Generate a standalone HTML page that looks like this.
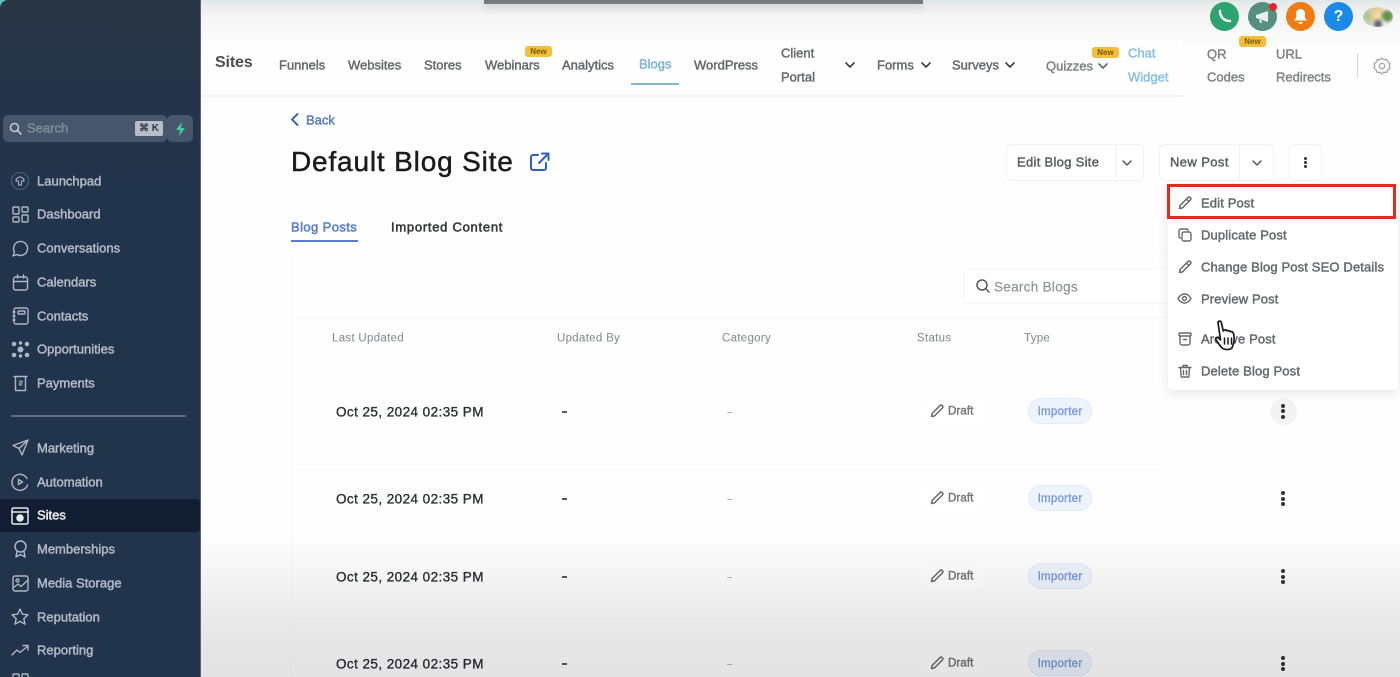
<!DOCTYPE html>
<html><head><meta charset="utf-8"><style>
*{box-sizing:border-box}
html,body{margin:0;padding:0;width:1400px;height:677px;overflow:hidden;background:#fefefe}
body{font-family:"Liberation Sans",sans-serif;position:relative}
#w{position:absolute;inset:0;filter:blur(.35px);overflow:hidden}
.t{position:absolute;white-space:nowrap;line-height:1;transform:translateY(-50%);-webkit-text-stroke-width:.45px}
.a{position:absolute}
svg{position:absolute;overflow:visible;fill:none;stroke-linecap:round;stroke-linejoin:round}
.s{font-size:13px;color:#b9c2cd;left:37px;opacity:.95}
.n{font-size:13px;color:#55585e;opacity:.9}
.bd{position:absolute;background:#f3bf3a;border-radius:3px;color:#7a5a10;font-size:8px;font-weight:700;text-align:center;line-height:11px;height:11px;width:27px}
.m{font-size:13px;color:#55585e;left:1201px;opacity:.9;letter-spacing:.14px}
.h{font-size:11.5px;color:#8b8f96;letter-spacing:.3px;-webkit-text-stroke-width:.1px}
.d{font-size:13.5px;color:#2c2f34;left:336px;letter-spacing:.43px;-webkit-text-stroke-width:.35px}
.btn{position:absolute;background:#fff;border:1px solid #f1f2f4;border-radius:6px;height:37px;top:144px}
.dr{font-size:11.5px;color:#777;left:948px;letter-spacing:.1px}
.im{position:absolute;left:1028px;width:64px;height:26px;border-radius:13px;background:#eef4fd;border:1px solid #e3e9f4;color:#7d9bd6;font-size:11.5px;text-align:center;line-height:26px;-webkit-text-stroke-width:.4px;letter-spacing:.25px}
.ds{position:absolute;width:4px;height:4px;border-radius:50%;background:#333}
.dash{position:absolute;left:562px;width:5px;height:1.5px;background:#55585c}
.dash2{position:absolute;left:727px;width:5px;height:1px;background:#b5b5b5}
.dp{position:absolute;left:924px;width:57px;height:25px;background:#fff;border-radius:6px}
</style></head><body><div id="w">

<!-- page backdrop -->
<div class="a" style="left:200px;top:0;width:1200px;height:46px;background:linear-gradient(#e6e7e8 0,#f3f3f4 14px,#fbfbfb 40px)"></div>
<div class="a" style="left:200px;top:0;width:1200px;height:2px;background:#dfe9ec"></div>
<div class="a" style="left:484px;top:0;width:439px;height:4px;background:#77797d;box-shadow:0 3px 8px rgba(0,0,0,.18)"></div>
<div class="a" style="left:200px;top:40px;width:983px;height:57px;background:#fefefe;border-bottom:2px solid #f2f3f5"></div>

<!-- sidebar -->
<div class="a" style="left:0;top:0;width:12px;height:12px;background:#5cc5cc"></div>
<div class="a" style="left:0;top:0;width:201px;height:677px;background:linear-gradient(#2a3644 0,#263548 60px,#22334c 200px,#22334c 100%);border-right:1px solid #5b6472;border-top-left-radius:8px"></div>
<div class="a" style="left:3px;top:115px;width:164px;height:27px;border-radius:5px;background:#47566a"></div>
<div class="a" style="left:167px;top:115px;width:26px;height:27px;border-radius:5px;background:#47566a"></div>
<svg style="left:9px;top:122px" width="13" height="13" stroke="#c3c9d0" stroke-width="1.6"><circle cx="5.5" cy="5.5" r="4"/><path d="M8.5 8.5L12 12"/></svg>
<div class="t" style="left:27px;top:128px;font-size:13px;color:#7f8b9a">Search</div>
<div class="a" style="left:135px;top:121px;width:28px;height:15px;background:#b7bec7;border-radius:2px;color:#2f3a48;font-size:10px;font-weight:700;text-align:center;line-height:15px">⌘ K</div>
<svg style="left:174px;top:122px" width="13" height="14"><path d="M8 0L2 8H6L5 14L11 6H7Z" fill="#3ecf9e"/></svg>

<div class="t s" style="top:181px">Launchpad</div>
<div class="t s" style="top:214px">Dashboard</div>
<div class="t s" style="top:248px">Conversations</div>
<div class="t s" style="top:282px">Calendars</div>
<div class="t s" style="top:315.500px">Contacts</div>
<div class="t s" style="top:349px">Opportunities</div>
<div class="t s" style="top:383px">Payments</div>
<div class="a" style="left:11px;top:415px;width:175px;height:2px;background:#5f7082"></div>
<div class="t s" style="top:448px">Marketing</div>
<div class="t s" style="top:481.500px">Automation</div>
<div class="a" style="left:0;top:499px;width:200px;height:33px;background:#111d30;border-radius:0 4px 4px 0"></div>
<div class="t s" style="top:515px;color:#f0f2f5;opacity:1">Sites</div>
<div class="t s" style="top:549px">Memberships</div>
<div class="t s" style="top:583px">Media Storage</div>
<div class="t s" style="top:616.500px">Reputation</div>
<div class="t s" style="top:650px">Reporting</div>

<svg style="left:11px;top:172px" width="18" height="18" stroke="#9aa4b1" stroke-width="1.3"><circle cx="9" cy="9" r="8.5" stroke="#4a5a6e"/><path d="M5 9a4 4 0 0 1 8 0h-2.5v4h-3V9Z"/></svg>
<svg style="left:12px;top:206px" width="17" height="17" stroke="#aeb7c2" stroke-width="1.4"><rect x="1" y="1" width="6" height="7" rx="1"/><rect x="10" y="1" width="6" height="5" rx="1"/><rect x="1" y="11" width="6" height="5" rx="1"/><rect x="10" y="9" width="6" height="7" rx="1"/></svg>
<svg style="left:12px;top:240px" width="17" height="17" stroke="#aeb7c2" stroke-width="1.4"><path d="M1 16l1.5-4A7 7 0 1 1 5 14.5Z"/></svg>
<svg style="left:12px;top:274px" width="17" height="17" stroke="#aeb7c2" stroke-width="1.4"><rect x="1.5" y="3" width="14" height="13" rx="2"/><path d="M1.5 7.5h14M5.5 1v3M11.5 1v3"/></svg>
<svg style="left:12px;top:307px" width="17" height="18" stroke="#aeb7c2" stroke-width="1.4"><rect x="2" y="1" width="14" height="16" rx="2"/><rect x="6" y="4" width="7" height="3" rx="1"/><path d="M1 5h2M1 9h2M1 13h2"/></svg>
<svg style="left:11px;top:341px" width="19" height="17" stroke="#aeb7c2" stroke-width="1"><g fill="#aeb7c2"><circle cx="9.5" cy="8.500" r="2.500"/><circle cx="3" cy="3" r="1.800"/><circle cx="16" cy="3" r="1.800"/><circle cx="3" cy="14" r="1.800"/><circle cx="16" cy="14" r="1.800"/><circle cx="9.500" cy="2" r="1.200"/><circle cx="9.500" cy="15" r="1.200"/></g></svg>
<svg style="left:13px;top:375px" width="15" height="17" stroke="#aeb7c2" stroke-width="1.400"><path d="M1 1.500h13M2.500 1.500v14h10v-14"/><path d="M6 6h3v2H6.500v2H9" stroke-width="1.100"/></svg>
<svg style="left:12px;top:439px" width="17" height="17" stroke="#aeb7c2" stroke-width="1.400"><path d="M16 1L1 6.500l6 3 3 6.500ZM7 9.500L16 1"/></svg>
<svg style="left:11px;top:473px" width="18" height="18" stroke="#aeb7c2" stroke-width="1.400"><path d="M16 5.500A8 8 0 1 0 16.500 12"/><path d="M7.500 6.500l4 2.500-4 2.500Z"/></svg>
<svg style="left:11px;top:507px" width="18" height="18" stroke="#e6e9ee" stroke-width="1.500"><rect x="1" y="1" width="16" height="16" rx="1.500"/><path d="M1 5h16"/><circle cx="9" cy="11" r="3" fill="#e6e9ee"/></svg>
<svg style="left:13px;top:540px" width="15" height="18" stroke="#aeb7c2" stroke-width="1.500"><circle cx="7.500" cy="6.500" r="5.500"/><path d="M4 11.500L3 17l4.500-2.500L12 17l-1-5.500"/></svg>
<svg style="left:12px;top:575px" width="17" height="17" stroke="#aeb7c2" stroke-width="1.400"><rect x="1" y="1" width="15" height="15" rx="2"/><circle cx="5.500" cy="5.500" r="1.500"/><path d="M1 13l5-4 3 2.500L16 5"/></svg>
<svg style="left:11px;top:608px" width="18" height="17" stroke="#aeb7c2" stroke-width="1.400"><path d="M9 1l2.400 5.200 5.600.6-4.200 3.800 1.200 5.600L9 13.400 4 16.200l1.200-5.600L1 6.800l5.600-.6Z"/></svg>
<svg style="left:11px;top:644px" width="18" height="12" stroke="#aeb7c2" stroke-width="1.400"><path d="M1 11l5-5 3 2.500L17 2M12 1.500h5V6"/></svg>
<svg style="left:12px;top:673px" width="17" height="6" stroke="#aeb7c2" stroke-width="1.400"><rect x="1" y="1" width="6" height="7" rx="1"/><rect x="10" y="1" width="6" height="7" rx="1"/></svg>

<!-- top nav -->
<div class="t" style="left:215px;top:63px;font-size:16px;font-weight:700;color:#3a3c40;opacity:.9;letter-spacing:-.15px;-webkit-text-stroke-width:0">Sites</div>
<div class="t n" style="left:279px;top:65px">Funnels</div>
<div class="t n" style="left:348px;top:65px">Websites</div>
<div class="t n" style="left:424px;top:65px">Stores</div>
<div class="t n" style="left:485px;top:65px">Webinars</div>
<div class="bd" style="left:525px;top:46px">New</div>
<div class="t n" style="left:562px;top:65px">Analytics</div>
<div class="t n" style="left:639px;top:64px;color:#7fb2d9;opacity:1">Blogs</div>
<div class="a" style="left:631px;top:83px;width:48px;height:2px;background:#84b6d8"></div>
<div class="t n" style="left:694px;top:65px">WordPress</div>
<div class="t n" style="left:781px;top:53px">Client</div>
<div class="t n" style="left:781px;top:77px">Portal</div>
<svg style="left:845px;top:62px" width="10" height="6" stroke="#44464b" stroke-width="1.800"><path d="M1 1l4 4 4-4"/></svg>
<div class="t n" style="left:877px;top:65px">Forms</div>
<svg style="left:921px;top:62px" width="10" height="6" stroke="#44464b" stroke-width="1.800"><path d="M1 1l4 4 4-4"/></svg>
<div class="t n" style="left:952px;top:65px">Surveys</div>
<svg style="left:1005px;top:62px" width="10" height="6" stroke="#44464b" stroke-width="1.800"><path d="M1 1l4 4 4-4"/></svg>
<div class="t n" style="left:1046px;top:66px;opacity:.75">Quizzes</div>
<svg style="left:1098px;top:63px" width="10" height="6" stroke="#6a6d72" stroke-width="1.800"><path d="M1 1l4 4 4-4"/></svg>
<div class="bd" style="left:1092px;top:47px">New</div>
<div class="t n" style="left:1128px;top:53px;color:#8cc0e0;opacity:1">Chat</div>
<div class="t n" style="left:1128px;top:77px;color:#8cc0e0;opacity:1">Widget</div>
<div class="t n" style="left:1207px;top:54px;opacity:.75">QR</div>
<div class="t n" style="left:1207px;top:77px;opacity:.75">Codes</div>
<div class="bd" style="left:1239px;top:36px">New</div>
<div class="t n" style="left:1276px;top:54px;opacity:.75">URL</div>
<div class="t n" style="left:1276px;top:77px;opacity:.75">Redirects</div>
<div class="a" style="left:1357px;top:54px;width:1px;height:24px;background:#d5d7da"></div>
<svg style="left:1373px;top:57px" width="18" height="18" stroke="#a3a6ab" stroke-width="1.300"><circle cx="9" cy="9" r="2.700"/><path d="M9 1l2 1.800 2.800-.3 1 2.600 2.200 1.500-.8 2.400.8 2.400-2.200 1.500-1 2.600-2.800-.3L9 17l-2-1.800-2.800.3-1-2.600L1 11.400 1.800 9 1 6.600l2.200-1.500 1-2.600 2.800.3Z"/></svg>

<!-- header circles -->
<div class="a" style="left:1210px;top:2px;width:29px;height:29px;border-radius:50%;background:#2ea36f"></div>
<svg style="left:1217px;top:9px" width="15" height="15" stroke="#fff" stroke-width="2.400"><path d="M3 2c0 6 4 10 10 10"/></svg>
<div class="a" style="left:1248px;top:2px;width:29px;height:29px;border-radius:50%;background:#55907f"></div>
<svg style="left:1255px;top:10px" width="16" height="14"><path d="M1 5l12-4v11L1 8Z M4 9l1 4h2l-1-4Z" fill="#e6efec"/></svg>
<div class="a" style="left:1269px;top:3px;width:8px;height:8px;border-radius:50%;background:#e8242a"></div>
<div class="a" style="left:1286px;top:2px;width:29px;height:29px;border-radius:50%;background:#f07d14"></div>
<svg style="left:1293px;top:8px" width="15" height="17"><path d="M7.500 1a4.500 4.500 0 0 0-4.500 4.500V10L1 12.500h13L12 10V5.500A4.500 4.500 0 0 0 7.500 1Z M5.500 14a2 2 0 0 0 4 0Z" fill="#fff"/></svg>
<div class="a" style="left:1324px;top:2px;width:29px;height:29px;border-radius:50%;background:#1a8ae8;color:#fff;font-weight:700;font-size:16px;line-height:29px;text-align:center">?</div>
<div class="a" style="left:1363px;top:7px;width:30px;height:20px;border-radius:50%;background:radial-gradient(circle at 82% 45%,#5f8a4c 0,#6f9a5c 14%,transparent 28%),radial-gradient(circle at 50% 85%,#4a5670 0,#8c8d9c 14%,transparent 26%),radial-gradient(circle at 48% 40%,#f1dfb4 0,#e3c98f 28%,transparent 48%),radial-gradient(circle at 18% 45%,#a9bf8a 0,#c9d4b4 30%,#e8e8e0 60%)"></div>

<!-- page head -->
<svg style="left:290px;top:113px" width="9" height="13" stroke="#3f67b3" stroke-width="2"><path d="M7.500 1L2 6.500 7.500 12"/></svg>
<div class="t" style="left:306px;top:119.500px;font-size:13px;color:#5b7cc0">Back</div>
<div class="t" style="left:291px;top:162px;font-size:28px;color:#1a1b1e;letter-spacing:.83px">Default Blog Site</div>
<svg style="left:530px;top:152px" width="20" height="19" stroke="#2f62c0" stroke-width="2"><path d="M8 3H3a2 2 0 0 0-2 2v11a2 2 0 0 0 2 2h11a2 2 0 0 0 2-2v-5M9 11L18 2M12 1.500h6.500V8"/></svg>

<div class="btn" style="left:1006px;width:138px"></div>
<div class="a" style="left:1115px;top:144px;width:1px;height:37px;background:#f1f2f4"></div>
<div class="t" style="left:1017px;top:162px;font-size:13px;color:#4e5156;opacity:.92;letter-spacing:.3px">Edit Blog Site</div>
<svg style="left:1122px;top:160px" width="10" height="6" stroke="#55585d" stroke-width="1.500"><path d="M1 1l4 4 4-4"/></svg>
<div class="btn" style="left:1159px;width:115px"></div>
<div class="a" style="left:1239px;top:144px;width:1px;height:37px;background:#f1f2f4"></div>
<div class="t" style="left:1170px;top:162px;font-size:13px;color:#4e5156;opacity:.92;letter-spacing:.4px">New Post</div>
<svg style="left:1252px;top:160px" width="10" height="6" stroke="#55585d" stroke-width="1.500"><path d="M1 1l4 4 4-4"/></svg>
<div class="btn" style="left:1289px;width:33px"></div>
<div class="ds" style="left:1304px;top:157px;width:3px;height:3px"></div><div class="ds" style="left:1304px;top:161px;width:3px;height:3px"></div><div class="ds" style="left:1304px;top:165px;width:3px;height:3px"></div>

<div class="t" style="left:291px;top:227px;font-size:13px;color:#5a7fc8;letter-spacing:.4px;-webkit-text-stroke-width:.55px">Blog Posts</div>
<div class="a" style="left:291px;top:240px;width:67px;height:2px;background:#5a7fc8"></div>
<div class="t" style="left:391px;top:227px;font-size:13px;color:#36383c;letter-spacing:.73px;-webkit-text-stroke-width:.55px">Imported Content</div>

<!-- table -->
<div class="a" style="left:291px;top:253px;width:880px;height:424px;border-left:1px solid #f9f9fa;border-top:1px solid #f8f8f9"></div>
<div class="a" style="left:292px;top:317px;width:880px;height:1px;background:#f7f7f9"></div>
<div class="a" style="left:963px;top:268px;width:210px;height:36px;background:#fff;border:1px solid #f3f4f5;border-radius:6px"></div>
<svg style="left:976px;top:279px" width="14" height="14" stroke="#55585d" stroke-width="1.500"><circle cx="6" cy="6" r="5"/><path d="M10 10l3 3"/></svg>
<div class="t" style="left:994px;top:287px;font-size:13.500px;color:#8f9297;letter-spacing:.3px;-webkit-text-stroke-width:.2px">Search Blogs</div>

<div class="t h" style="left:332px;top:338.500px">Last Updated</div>
<div class="t h" style="left:557px;top:338.500px">Updated By</div>
<div class="t h" style="left:722px;top:338.500px">Category</div>
<div class="t h" style="left:917px;top:338.500px">Status</div>
<div class="t h" style="left:1024px;top:338.500px">Type</div>

<div class="a" style="left:292px;top:464px;width:870px;height:1px;background:#fafafa"></div>
<div class="a" style="left:292px;top:533px;width:870px;height:1px;background:#fafafa"></div>
<div class="a" style="left:292px;top:618px;width:870px;height:1px;background:#f8f8f8"></div>

<!-- rows -->
<div class="t d" style="top:411.500px">Oct 25, 2024 02:35 PM</div>
<div class="dash" style="top:411px"></div><div class="dash2" style="top:412px"></div>
<div class="dp" style="top:399px"></div>
<svg style="left:930px;top:404px" width="14" height="14" stroke="#66696e" stroke-width="1.500"><path d="M1.500 12.500l.6-3L10 1.600a1.700 1.700 0 0 1 2.400 2.400L4.500 11.900Z"/></svg>
<div class="t dr" style="top:412px">Draft</div>
<div class="im" style="top:398px">Importer</div>
<div class="a" style="left:1270px;top:398px;width:27px;height:27px;border-radius:50%;background:#f3f3f5"></div>
<div class="ds" style="left:1281px;top:403.700px"></div><div class="ds" style="left:1281px;top:409px"></div><div class="ds" style="left:1281px;top:415px"></div>

<div class="t d" style="top:498.500px">Oct 25, 2024 02:35 PM</div>
<div class="dash" style="top:498px"></div><div class="dash2" style="top:499px"></div>
<div class="dp" style="top:486px"></div>
<svg style="left:930px;top:491px" width="14" height="14" stroke="#66696e" stroke-width="1.500"><path d="M1.500 12.500l.6-3L10 1.600a1.700 1.700 0 0 1 2.400 2.400L4.500 11.900Z"/></svg>
<div class="t dr" style="top:499px">Draft</div>
<div class="im" style="top:485px">Importer</div>
<div class="ds" style="left:1281px;top:491px"></div><div class="ds" style="left:1281px;top:496.500px"></div><div class="ds" style="left:1281px;top:502px"></div>

<div class="t d" style="top:576.500px">Oct 25, 2024 02:35 PM</div>
<div class="dash" style="top:576px"></div><div class="dash2" style="top:577px"></div>
<div class="dp" style="top:564px"></div>
<svg style="left:930px;top:569px" width="14" height="14" stroke="#66696e" stroke-width="1.500"><path d="M1.500 12.500l.6-3L10 1.600a1.700 1.700 0 0 1 2.400 2.400L4.500 11.900Z"/></svg>
<div class="t dr" style="top:577px">Draft</div>
<div class="im" style="top:563px">Importer</div>
<div class="ds" style="left:1281px;top:569px"></div><div class="ds" style="left:1281px;top:575px"></div><div class="ds" style="left:1281px;top:580px"></div>

<div class="t d" style="top:663.500px">Oct 25, 2024 02:35 PM</div>
<div class="dash" style="top:663px"></div><div class="dash2" style="top:664px"></div>
<div class="dp" style="top:651px"></div>
<svg style="left:930px;top:656px" width="14" height="14" stroke="#66696e" stroke-width="1.500"><path d="M1.500 12.500l.6-3L10 1.600a1.700 1.700 0 0 1 2.400 2.400L4.500 11.900Z"/></svg>
<div class="t dr" style="top:664px">Draft</div>
<div class="im" style="top:650px">Importer</div>
<div class="ds" style="left:1281px;top:656px"></div><div class="ds" style="left:1281px;top:661.500px"></div><div class="ds" style="left:1281px;top:667px"></div>

<!-- dropdown -->
<div class="a" style="left:1168px;top:184px;width:230px;height:206px;background:#fff;box-shadow:0 3px 12px rgba(0,0,0,.1);border-radius:0 0 4px 4px"></div>
<div class="a" style="left:1167px;top:184px;width:229px;height:35px;border:3px solid #e42a1c"></div>
<svg style="left:1178px;top:196px" width="14" height="14" stroke="#66696e" stroke-width="1.500"><path d="M1.500 12.500l.6-3L10 1.600a1.700 1.700 0 0 1 2.400 2.400L4.500 11.900ZM8.500 3l2.500 2.500"/></svg>
<div class="t m" style="top:203px">Edit Post</div>
<svg style="left:1178px;top:228px" width="14" height="14" stroke="#66696e" stroke-width="1.400"><rect x="4" y="4" width="9" height="9" rx="2"/><path d="M2.500 10A1.500 1.500 0 0 1 1 8.500V3a2 2 0 0 1 2-2h5.500A1.500 1.500 0 0 1 10 2.500"/></svg>
<div class="t m" style="top:235px">Duplicate Post</div>
<svg style="left:1178px;top:260px" width="14" height="14" stroke="#66696e" stroke-width="1.500"><path d="M1.500 12.500l.6-3L10 1.600a1.700 1.700 0 0 1 2.400 2.400L4.500 11.900ZM8.500 3l2.500 2.500"/></svg>
<div class="t m" style="top:267px">Change Blog Post SEO Details</div>
<svg style="left:1177px;top:293px" width="15" height="11" stroke="#66696e" stroke-width="1.400"><path d="M1 5.500C3 2 5 1 7.500 1S12 2 14 5.500C12 9 10 10 7.500 10S3 9 1 5.500Z"/><circle cx="7.500" cy="5.500" r="2"/></svg>
<div class="t m" style="top:299px">Preview Post</div>
<svg style="left:1178px;top:332px" width="14" height="14" stroke="#66696e" stroke-width="1.400"><rect x="1" y="1" width="12" height="3" rx="1"/><path d="M2 4v7a2 2 0 0 0 2 2h6a2 2 0 0 0 2-2V4M5.500 7.500h3"/></svg>
<div class="t m" style="top:339px">Archive Post</div>
<svg style="left:1178px;top:364px" width="14" height="14" stroke="#66696e" stroke-width="1.400"><path d="M1 3.500h12M5 3.500V1.500h4v2M2.500 3.500l.7 9.500h7.600l.7-9.500M5.500 6.500v4M8.500 6.500v4"/></svg>
<div class="t m" style="top:371px">Delete Blog Post</div>

<!-- hand cursor -->
<svg style="left:1214px;top:320px" width="24" height="31"><path d="M4 2.500c0-1.800 3-1.800 3.300 0l2 8.500 1-.8c1-.7 2.500-.2 2.800.7 1-.6 2.500-.3 3 .8 1.200-.5 2.700 0 3.200 1.300 1 2.500 1.200 7 .2 10.500l-1.500 4.500c-2.500 2-7 2-9.500.3-2-1.500-4-5-6.500-8.500-1-1.400.8-3 2.200-1.900l2.300 2Z" fill="#fff" stroke="#1a1a1a" stroke-width="1.700"/><path d="M10.500 18v6M14 18v6M17.500 18v6" stroke="#1a1a1a" stroke-width="1.500"/></svg>

<!-- bottom video shade -->
<div class="a" style="left:201px;top:535px;width:1199px;height:142px;background:linear-gradient(rgba(0,0,0,0),rgba(0,0,0,.04) 40px,rgba(0,0,0,.085) 90px,rgba(0,0,0,.105))"></div>

</div></body></html>
